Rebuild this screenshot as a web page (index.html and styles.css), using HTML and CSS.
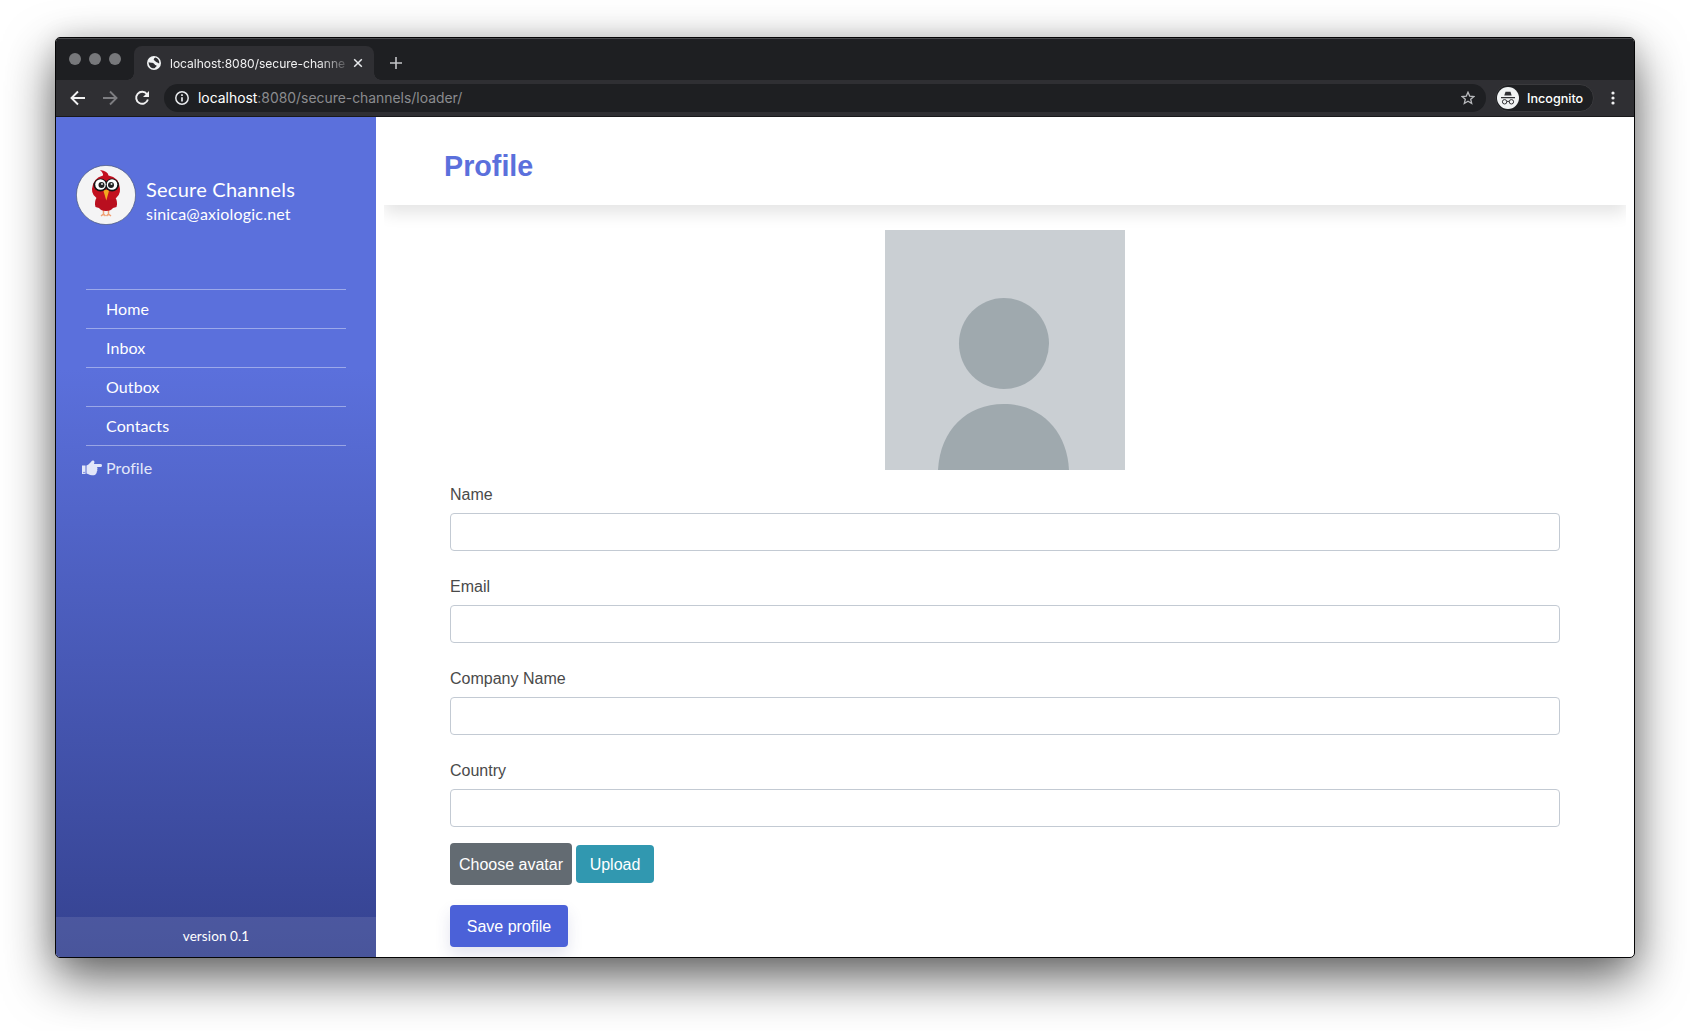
FILE: index.html
```html
<!DOCTYPE html>
<html lang="en">
<head>
<meta charset="utf-8">
<title>Secure Channels</title>
<link rel="stylesheet" href="styles.css">
</head>
<body>
<div class="window">
  <div class="tabstrip">
    <div class="lights"><i></i><i></i><i></i></div>
    <div class="tab">
      <svg class="globe" width="14" height="14" viewBox="0 0 14 14"><circle cx="7" cy="7" r="7" fill="#f1f3f4"/><path d="M1.600 6.200C3 7 5 6.300 6.500 7.300S7.500 9 9 9.200 9 11 7.500 12.300C4.500 12.700 1.600 10 1.600 6.200ZM8.300 1.500C6.500 2.500 6.300 4 7.500 4.500S8.500 6 9.800 6.200 11 7.500 12.300 7.300C12.500 4.500 10.800 2 8.300 1.500Z" fill="#2f2f33"/></svg>
      <span class="tab-title">localhost:8080/secure-channe</span>
      <svg class="close" width="10" height="10" viewBox="0 0 10 10" stroke="#e8eaed" stroke-width="1.500"><path d="M1.200 1.200l7.600 7.600M8.800 1.200L1.200 8.800"/></svg>
    </div>
    <svg class="plus" width="12" height="12" viewBox="0 0 12 12" stroke="#c4c5c8" stroke-width="1.600"><path d="M6 0v12M0 6h12"/></svg>
  </div>
  <div class="toolbar">
    <svg class="ico" width="16" height="16" viewBox="0 0 16 16" fill="none" stroke="#f1f1f2" stroke-width="1.900"><path d="M15 8H2M8 1.500L1.500 8 8 14.500"/></svg>
    <svg class="ico" width="16" height="16" viewBox="0 0 16 16" fill="none" stroke="#7d7d81" stroke-width="1.900"><path d="M1 8h13M8 1.500L14.500 8 8 14.500"/></svg>
    <svg class="ico" width="16" height="16" viewBox="0 0 16 16" fill="none" stroke="#f1f1f2" stroke-width="1.900"><path d="M13 4.200A6 6 0 1 0 13.900 9.500"/><path d="M15 1v6H9z" fill="#f1f1f2" stroke="none"/></svg>
    <div class="address">
      <svg width="14" height="14" viewBox="0 0 14 14"><circle cx="7" cy="7" r="6.200" fill="none" stroke="#e8eaed" stroke-width="1.500"/><path d="M7 6.200v4.200M7 3.300v1.600" stroke="#e8eaed" stroke-width="1.700"/></svg>
      <span class="url"><b>localhost</b>:8080/secure-channels/loader/</span>
      <svg class="star" width="14" height="14" viewBox="0 0 14 14" fill="none" stroke="#b9babd" stroke-width="1.300"><path d="M7 1.200l1.700 3.900 4.200.4-3.200 2.800 1 4.200L7 10.300l-3.700 2.200 1-4.200L1.100 5.500l4.200-.4z"/></svg>
    </div>
    <div class="incognito">
      <svg width="22" height="22" viewBox="0 0 22 22"><circle cx="11" cy="11" r="11" fill="#f1f3f4"/><path d="M7.300 8.600L8.500 4.700h5l1.200 3.900z" fill="#2f2f33"/><path d="M4 10.700h14" stroke="#2f2f33" stroke-width="1.200"/><g fill="none" stroke="#2f2f33" stroke-width="1"><circle cx="7.600" cy="14.800" r="2.200"/><circle cx="14.400" cy="14.800" r="2.200"/><path d="M9.800 14.600q1.200-.8 2.400 0"/></g></svg>
      <span>Incognito</span>
    </div>
    <svg class="dots" width="4" height="14" viewBox="0 0 4 14" fill="#f1f1f2"><circle cx="2" cy="2" r="1.600"/><circle cx="2" cy="7" r="1.600"/><circle cx="2" cy="12" r="1.600"/></svg>
  </div>
  <div class="page">
    <aside class="sidebar">
      <div class="user">
        <svg width="60" height="60" viewBox="0 0 60 60"><circle cx="30" cy="30" r="29.600" fill="#f4f4f5" stroke="#4b5878" stroke-width=".7"/><path d="M27.500 45v5.500M25 51l2.500-2 2 2M32.500 45v5.500M30.500 51l2-2 2.500 2" stroke="#f0a173" stroke-width="1.500" fill="none"/><path d="M22 31Q17.500 36 19.500 42L23 43Q25 46 30 46T37 43L40.500 42Q42.500 36 38 31Z" fill="#b90f1f"/><path d="M24 5Q32 6 32.500 10.500Q43 12 44 24Q44.500 31 37.500 34.500H23.500Q15.500 31 16 24Q17 13 27 10.500Q27.500 8 24 5Z" fill="#c3101f"/><ellipse cx="24.500" cy="20" rx="7" ry="6.500" fill="#161616"/><ellipse cx="36" cy="20" rx="7" ry="6.500" fill="#161616"/><circle cx="24.500" cy="19.500" r="5.300" fill="#fff"/><circle cx="36" cy="19.500" r="5.300" fill="#fff"/><circle cx="25.500" cy="20" r="3" fill="#222"/><circle cx="35" cy="20" r="3" fill="#222"/><circle cx="26" cy="19" r="1" fill="#ddd"/><circle cx="35.500" cy="19" r="1" fill="#ddd"/><path d="M27.500 26Q30.200 23.500 33 26L30.300 35.500Z" fill="#f2a91f"/></svg>
        <div class="who"><div class="app">Secure Channels</div><div class="mail">sinica@axiologic.net</div></div>
      </div>
      <nav class="menu">
        <a>Home</a><a>Inbox</a><a>Outbox</a><a>Contacts</a>
        <a class="active"><svg width="20" height="16" viewBox="0 0 20 16" fill="#e3e7f9"><path d="M0 5.500h3.500v8.500H0zM4.500 5.500Q6 5 8 3L10 .8Q11 0 12 .8T12 4h7q1 .2 1 1.500T19 7h-4q1 1.200.2 2.500.6 1.300-.5 2.300.2 1.300-.7 2-.5 1.400-2 1.400h-2Q8 15.200 6.500 14.200L4.500 13.500z"/><circle cx="2" cy="12.500" r=".7" fill="#566bd2"/></svg><span>Profile</span></a>
      </nav>
      <footer class="version"><span>version 0.1</span></footer>
    </aside>
    <main class="main">
      <header class="head"><h1>Profile</h1></header>
      <div class="body">
        <svg class="photo" width="240" height="240" viewBox="0 0 240 240"><path fill="#cacfd3" d="M0 0h240v240H0z"/><ellipse cx="119" cy="113.500" rx="45" ry="45.500" fill="#9fa9ae"/><path d="M53 240C55 200 82 174 118.500 174S182 200 184 240Z" fill="#9fa9ae"/></svg>
        <form class="form">
          <label>Name<input type="text"></label>
          <label>Email<input type="text"></label>
          <label>Company Name<input type="text"></label>
          <label>Country<input type="text"></label>
          <div class="row"><button type="button" class="btn choose">Choose avatar</button><button type="button" class="btn upload">Upload</button></div>
          <button type="button" class="btn save">Save profile</button>
        </form>
      </div>
    </main>
  </div>
</div>
</body>
</html>
```
FILE: styles.css
```css
* { box-sizing: border-box; }
body { margin: 0; height: 1031px; padding: 37px 55px; background: #fff; font-family: "Liberation Sans", Arial, sans-serif; overflow: hidden; }
svg { display: block; flex: none; }
.window { width: 1580px; height: 921px; border: 1px solid #050506; border-radius: 5px; overflow: hidden; display: flex; flex-direction: column; background: #fff; box-shadow: 0 20px 50px rgba(0,0,0,.62), 0 0 24px rgba(0,0,0,.1); }
.tabstrip { height: 42px; background: #1e1f22; display: flex; box-shadow: inset 0 1px #4a4b4e; }
.lights { width: 78px; display: flex; gap: 8px; padding: 15px 0 0 13px; }
.lights i { width: 12px; height: 12px; border-radius: 50%; background: #77787b; }
.tab { position: relative; width: 240px; height: 34px; margin-top: 8px; border-radius: 8px 8px 0 0; background: #2f2f33; display: flex; align-items: center; padding: 0 12px 0 13px; font: 12.100px Inter, sans-serif; color: #f1f1f2; }
.tab::before, .tab::after { content: ""; position: absolute; bottom: 0; width: 7px; height: 7px; }
.tab::before { left: -7px; background: radial-gradient(circle at 0 0, #1e1f22 6.500px, #2f2f33 7px); }
.tab::after { right: -7px; background: radial-gradient(circle at 100% 0, #1e1f22 6.500px, #2f2f33 7px); }
.tab-title { width: 176px; margin-left: 9px; white-space: nowrap; letter-spacing: -.05px; -webkit-mask-image: linear-gradient(90deg, #000 85%, transparent 104%); mask-image: linear-gradient(90deg, #000 85%, transparent 104%); }
.close { margin-left: 8px; }
.plus { margin: 19px 0 0 16px; }
.toolbar { height: 37px; background: #2f2f33; border-bottom: 1px solid #19191b; display: flex; align-items: center; padding: 0 19px 0 14px; }
.ico { margin-right: 16px; }
.address { flex: 1; height: 28px; border-radius: 14px; background: #1e1f22; display: flex; align-items: center; padding: 0 11px; margin-left: -2px; }
.url { flex: 1; margin-left: 9px; font: 13.900px/18px Inter, sans-serif; color: #8b8c8f; }
.url b { font-weight: 400; color: #fff; }
.incognito { width: 99px; height: 28px; margin-left: 9px; border: 1px solid #3a3a3d; border-radius: 14px; background: #1e1f22; color: #fff; display: flex; align-items: center; gap: 8px; padding-left: 1px; font: 500 12.600px Inter, sans-serif; }
.dots { margin-left: 17px; }
.page { flex: 1; display: flex; min-height: 0; }
.sidebar { width: 320px; background: linear-gradient(180deg, #5b70dc 30%, #354290 100%); color: #fff; font-family: Lato, sans-serif; display: flex; flex-direction: column; }
.user { display: flex; gap: 10px; padding: 48px 0 0 20px; }
.who { padding-top: 11px; white-space: nowrap; }
.app { font-size: 20px; line-height: 26px; letter-spacing: .25px; }
.mail { font-size: 16px; line-height: 24px; letter-spacing: .2px; }
.menu { margin: 63px 30px 0; display: flex; flex-direction: column; }
.menu a { height: 39px; border-top: 1px solid rgba(255,255,255,.4); padding-left: 20px; line-height: 38px; font-size: 16px; letter-spacing: .1px; }
.menu .active { height: 60px; display: flex; gap: 4px; padding: 0; margin: 0; color: #e3e7f9; }
.active svg { margin: 14px 0 0 -4px; }
.active span { line-height: 44px; }
.version { margin-top: auto; height: 40px; background: rgba(255,255,255,.1); text-align: center; line-height: 38px; font-size: 13.500px; letter-spacing: .1px; }
.main { flex: 1; padding: 0 8px; overflow: hidden; }
.head { height: 88px; padding: 32px 0 0 60px; box-shadow: 0 8px 16px rgba(0,0,0,.11); clip-path: inset(0 0 -30px 0); }
.head h1 { margin: 0; font-size: 28.700px; line-height: 34px; color: #5b70dc; }
.body { width: 1110px; margin: 25px auto 0; }
.photo { margin: 0 auto; }
.form { padding-top: 13px; color: #4a4a4a; font-size: 16px; }
.form label { display: block; height: 92px; line-height: 24px; }
.form input { display: block; width: 100%; height: 38px; margin: 6px 0 0; border: 1px solid #c3cad3; border-radius: 4px; background: #fff; }
.row { display: flex; align-items: center; gap: 4px; margin-top: -8px; height: 42px; }
.btn { border: 0; padding: 1px 0 0; border-radius: 4px; color: #fff; font: 16px/20px "Liberation Sans", Arial, sans-serif; }
.choose { width: 122px; height: 42px; background: #636b72; }
.upload { width: 78px; height: 38px; background: #3198b0; }
.save { width: 118px; height: 42px; margin-top: 20px; background: #4b61d8; box-shadow: 0 8px 16px rgba(55,65,145,.14); }
```
